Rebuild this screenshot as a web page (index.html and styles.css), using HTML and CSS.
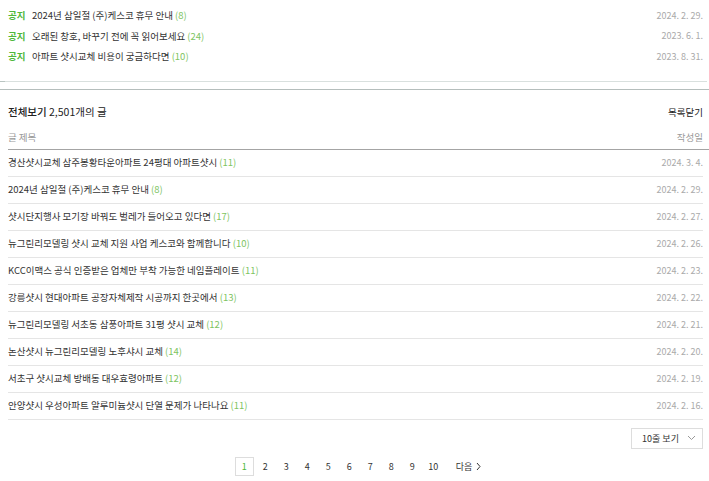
FILE: index.html
```html
<!DOCTYPE html>
<html>
<head>
    <title>전체보기</title>
    <meta charset="utf-8">
    <link rel="stylesheet" href="styles.css">
</head>
<body>
    <ul class="notice-list">
        <li class="notice-row">
            <span class="notice-tag">공지</span>
            <span class="notice-title">2024년 삼일절 (주)케스코 휴무 안내 <em class="cmt">(8)</em></span>
            <span class="date">2024. 2. 29.</span>
        </li>
        <li class="notice-row">
            <span class="notice-tag">공지</span>
            <span class="notice-title">오래된 창호, 바꾸기 전에 꼭 읽어보세요 <em class="cmt">(24)</em></span>
            <span class="date">2023. 6. 1.</span>
        </li>
        <li class="notice-row">
            <span class="notice-tag">공지</span>
            <span class="notice-title">아파트 샷시교체 비용이 궁금하다면 <em class="cmt">(10)</em></span>
            <span class="date">2023. 8. 31.</span>
        </li>
    </ul>

    <div class="split">
        <div class="split-top"></div>
        <div class="split-bottom"></div>
    </div>

    <div class="board">
        <div class="board-head">
            <h2 class="board-title"><strong>전체보기</strong> 2,501개의 글</h2>
            <a class="fold">목록닫기</a>
        </div>
        <div class="col-head">
            <span>글 제목</span>
            <span>작성일</span>
        </div>
        <ul class="article-list">
            <li class="article"><span class="title">경산샷시교체 삼주봉황타운아파트 24평대 아파트샷시 <em class="cmt">(11)</em></span><span class="date">2024. 3. 4.</span></li>
            <li class="article"><span class="title">2024년 삼일절 (주)케스코 휴무 안내 <em class="cmt">(8)</em></span><span class="date">2024. 2. 29.</span></li>
            <li class="article"><span class="title">샷시단지행사 모기장 바꿔도 벌레가 들어오고 있다면 <em class="cmt">(17)</em></span><span class="date">2024. 2. 27.</span></li>
            <li class="article"><span class="title">뉴그린리모델링 샷시 교체 지원 사업 케스코와 함께합니다 <em class="cmt">(10)</em></span><span class="date">2024. 2. 26.</span></li>
            <li class="article"><span class="title">KCC이맥스 공식 인증받은 업체만 부착 가능한 네임플레이트 <em class="cmt">(11)</em></span><span class="date">2024. 2. 23.</span></li>
            <li class="article"><span class="title">강릉샷시 현대아파트 공장자체제작 시공까지 한곳에서 <em class="cmt">(13)</em></span><span class="date">2024. 2. 22.</span></li>
            <li class="article"><span class="title">뉴그린리모델링 서초동 삼풍아파트 31평 샷시 교체 <em class="cmt">(12)</em></span><span class="date">2024. 2. 21.</span></li>
            <li class="article"><span class="title">논산샷시 뉴그린리모델링 노후샤시 교체 <em class="cmt">(14)</em></span><span class="date">2024. 2. 20.</span></li>
            <li class="article"><span class="title">서초구 샷시교체 방배동 대우효령아파트 <em class="cmt">(12)</em></span><span class="date">2024. 2. 19.</span></li>
            <li class="article"><span class="title">안양샷시 우성아파트 알루미늄샷시 단열 문제가 나타나요 <em class="cmt">(11)</em></span><span class="date">2024. 2. 16.</span></li>
        </ul>

        <div class="list-tools">
            <button class="size-select">10줄 보기
                <svg width="9" height="6" viewBox="0 0 9 6"><path d="M1 1l3.5 3.5L8 1" fill="none" stroke="#999" stroke-width="1"/></svg>
            </button>
        </div>

        <div class="pager">
            <a class="page on">1</a>
            <a class="page">2</a>
            <a class="page">3</a>
            <a class="page">4</a>
            <a class="page">5</a>
            <a class="page">6</a>
            <a class="page">7</a>
            <a class="page">8</a>
            <a class="page">9</a>
            <a class="page">10</a>
            <a class="page next">다음
                <svg width="5" height="9" viewBox="0 0 5 9"><path d="M1 1l3 3.5L1 8" fill="none" stroke="#333" stroke-width="1"/></svg>
            </a>
        </div>
    </div>
</body>
</html>
```

FILE: styles.css
```css
body {
    margin: 0;
    font-family: "Noto Sans CJK KR", "Noto Sans", sans-serif;
    font-size: 9.5px;
    color: #333;
    background-color: #fff;
}

ul {
    list-style: none;
    margin: 0;
    padding: 0;
}

em {
    font-style: normal;
}

.cmt {
    color: #7ec45f;
}

.date {
    color: #aaa;
    font-size: 9px;
    white-space: nowrap;
}

/* notices */
.notice-list {
    padding: 5px 6px 0 8px;
}

.notice-row {
    display: flex;
    align-items: center;
    height: 20.5px;
}

.notice-tag {
    color: #4fb83b;
    font-weight: bold;
    width: 24px;
}

.notice-title {
    flex: 1;
}

/* cut line */
.split {
    margin-top: 14px;
}

.split-top {
    height: 1px;
    margin: 0 2px 0 0;
    border-left: 5px solid #b9c4c1;
    background-color: #d9e0de;
    box-sizing: border-box;
}

.split-bottom {
    height: 1px;
    margin-top: 7px;
    background-color: #b5bebc;
}

/* board */
.board {
    padding: 0 0 0 8px;
}

.board-head {
    display: flex;
    justify-content: space-between;
    align-items: center;
    margin-top: 14px;
    padding-right: 6px;
    height: 16px;
}

.board-title {
    margin: 0;
    font-size: 10.5px;
    font-weight: normal;
    color: #222;
}

.board-title strong {
    font-weight: 500;
}

.fold {
    font-size: 9.5px;
    color: #222;
}

.col-head {
    display: flex;
    justify-content: space-between;
    align-items: center;
    margin-top: 6px;
    height: 22px;
    padding: 0 6px 1px 0;
    color: #999;
    border-bottom: 1px solid #a4a4a4;
}

.article-list {
    margin-right: 6px;
}

.article {
    display: flex;
    justify-content: space-between;
    align-items: center;
    box-sizing: border-box;
    height: 27px;
    padding-bottom: 1px;
    border-bottom: 1px solid #e5e5e5;
}

.title {
    color: #333;
}

.list-tools {
    display: flex;
    justify-content: flex-end;
    margin: 8px 6px 0 0;
}

.size-select {
    display: flex;
    align-items: center;
    justify-content: center;
    gap: 8px;
    width: 72px;
    height: 21px;
    padding: 0 0 0 4px;
    font-family: inherit;
    font-size: 9px;
    color: #333;
    background-color: #fff;
    border: 1px solid #ddd;
    cursor: pointer;
}

.pager {
    display: flex;
    align-items: center;
    justify-content: center;
    gap: 2px;
    margin-top: 8px;
}

.page {
    display: flex;
    align-items: center;
    justify-content: center;
    box-sizing: border-box;
    min-width: 19px;
    height: 19px;
    font-size: 9px;
    color: #333;
    border: 1px solid transparent;
}

.page.on {
    color: #4fb83b;
    border-color: #ddd;
}

.page.next {
    gap: 4px;
    margin-left: 10px;
}
```
